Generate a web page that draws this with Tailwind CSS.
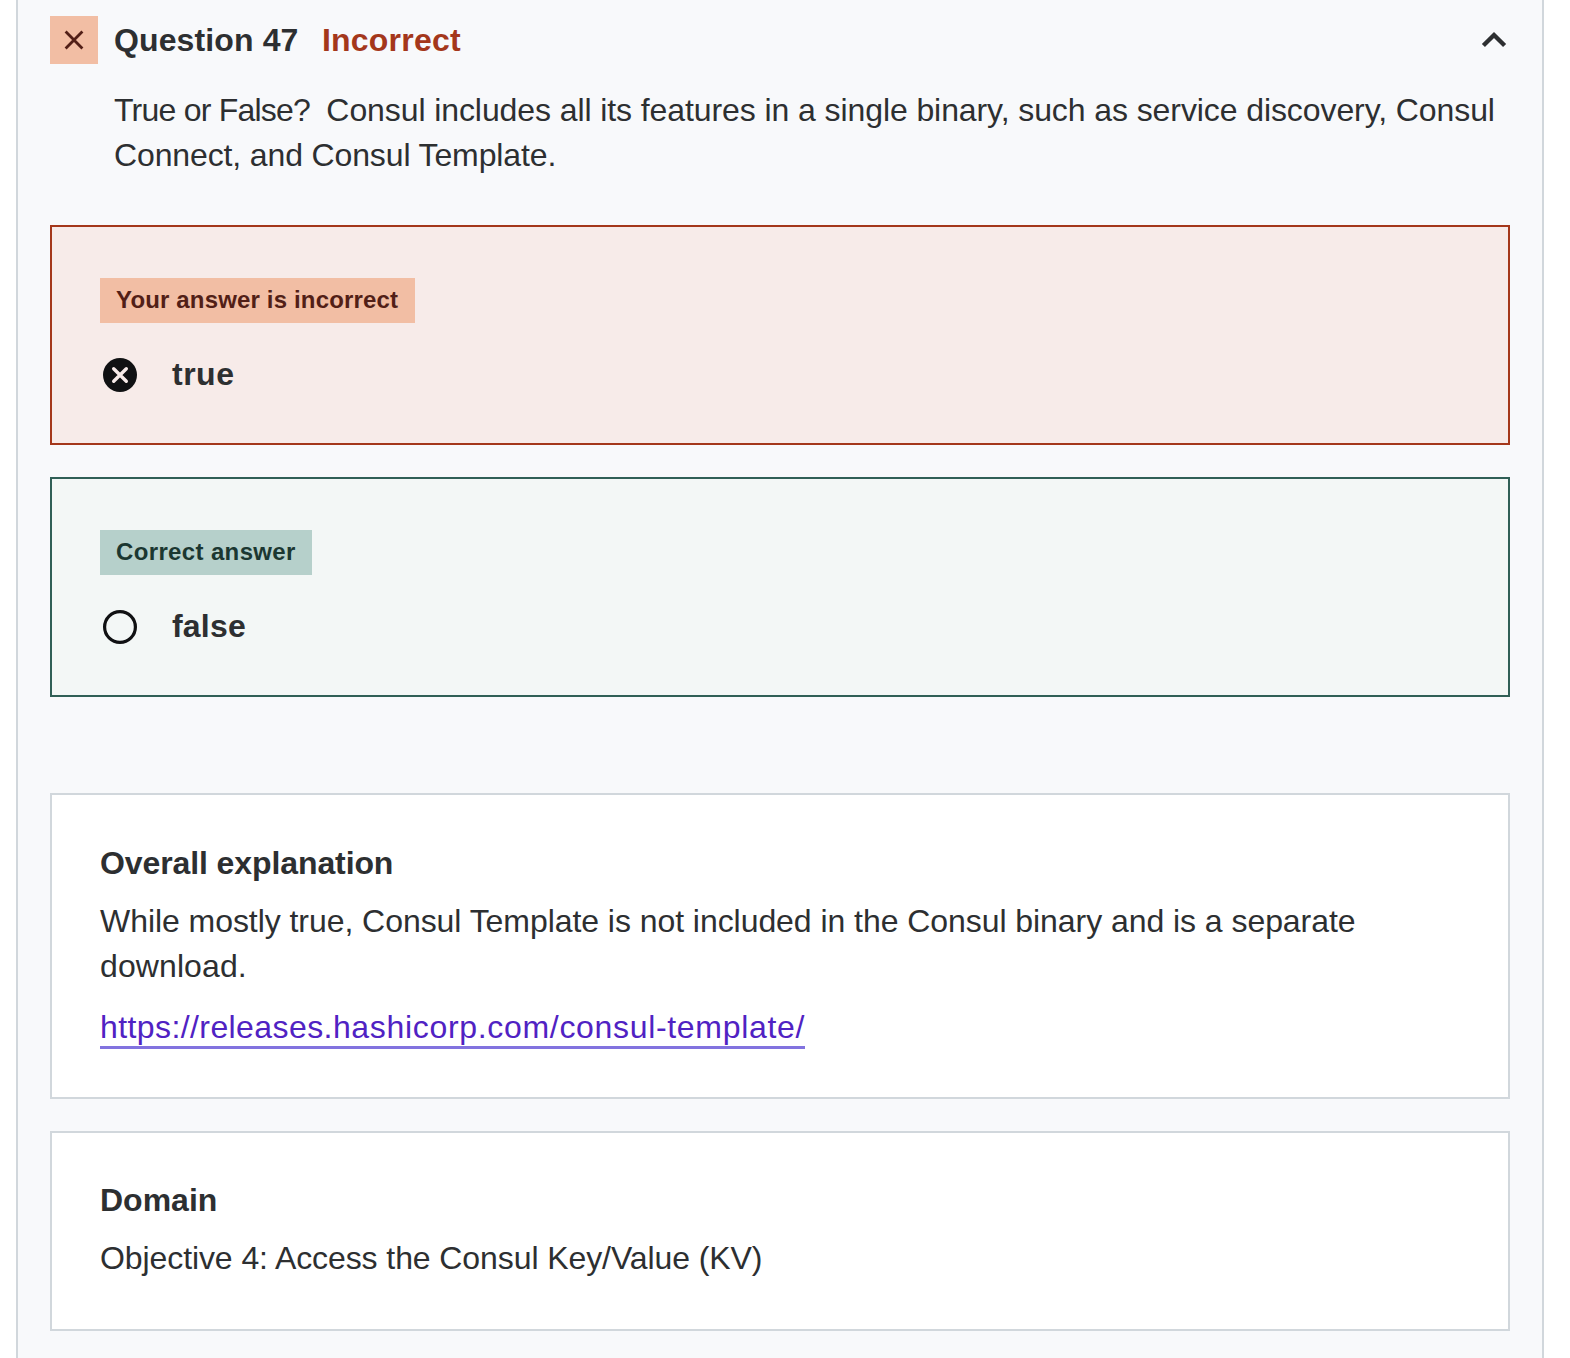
<!DOCTYPE html>
<html lang="en">
<head>
<meta charset="utf-8">
<title>Question 47</title>
<script src="https://cdn.jsdelivr.net/npm/@tailwindcss/browser@4"></script>
</head>
<body class="bg-white font-['Liberation_Sans',Arial,sans-serif] text-[32px] leading-[45px] text-[#2d2f31]">
<main class="ml-4 flex h-[1358px] w-[1528px] flex-col overflow-hidden border-x-2 border-[#d1d7dc] bg-[#f8f9fb] px-8 pt-4">
  <header class="flex h-12 items-center">
    <div class="flex size-12 items-center justify-center bg-[#f2bea4]">
      <svg class="size-12" viewBox="0 0 48 48" fill="none" stroke="#521f17" stroke-width="2.8"><path d="M15.6 15.6 32.4 32.4M32.4 15.6 15.6 32.4"/></svg>
    </div>
    <h2 class="ml-4 w-[208px] whitespace-nowrap font-bold tracking-[0.12px]">Question 47</h2>
    <span class="font-bold tracking-[0.2px] text-[#a4371b]">Incorrect</span>
    <svg class="ml-auto h-12 w-8" viewBox="0 0 32 48" fill="none" stroke="#2d2f31" stroke-width="4.4"><path d="M5.4 29.5 16 19l10.6 10.5"/></svg>
  </header>
  <div class="ml-16 mt-6 whitespace-nowrap">
    <p><span class="tracking-[-0.77px]">True or False?&nbsp; </span><span class="tracking-[-0.09px]">Consul includes all its features in a single binary, such as service discovery, Consul</span><br><span class="tracking-[-0.13px]">Connect, and Consul Template.</span></p>
  </div>
  <section class="mt-[47px] h-[220px] border-2 border-[#a4371b] bg-[#f7ebe9] px-12 pt-[51px]">
    <div class="flex h-[45px] w-[315px] items-center bg-[#f2bea4] pb-0.5 pl-4 text-2xl font-bold tracking-[0.16px] whitespace-nowrap text-[#521f17]"><span>Your answer is incorrect</span></div>
    <div class="mt-[29px] flex h-[46px] items-center">
      <svg class="size-10" viewBox="0 0 40 40" fill="none"><circle cx="20" cy="20" r="17" fill="#101113"/><path d="m13.7 13.7 12.6 12.6m0-12.6L13.7 26.3" stroke="#f7ebe9" stroke-width="3.4" stroke-linecap="round"/></svg>
      <span class="ml-8 pb-0.5 font-bold tracking-[0.5px]">true</span>
    </div>
  </section>
  <section class="mt-8 h-[220px] border-2 border-[#305f56] bg-[#f3f7f6] px-12 pt-[51px]">
    <div class="flex h-[45px] w-[212px] items-center bg-[#b6d0cb] pb-0.5 pl-4 text-2xl font-bold tracking-[0.36px] whitespace-nowrap text-[#1b3731]"><span>Correct answer</span></div>
    <div class="mt-[29px] flex h-[46px] items-center">
      <svg class="size-10" viewBox="0 0 40 40" fill="none"><circle cx="20" cy="20" r="15.4" stroke="#101113" stroke-width="3.2"/></svg>
      <span class="ml-8 pb-0.5 font-bold tracking-[0.2px]">false</span>
    </div>
  </section>
  <section class="mt-24 h-[306px] border-2 border-[#d1d7dc] bg-white px-12 pt-[46px] whitespace-nowrap">
    <h3 class="font-bold tracking-[-0.1px]">Overall explanation</h3>
    <p class="mt-[13px]"><span class="tracking-[-0.056px]">While mostly true, Consul Template is not included in the Consul binary and is a separate</span><br><span class="tracking-[0.1px]">download.</span></p>
    <a class="mt-4 flex h-[44px] w-[705px] border-b-[3px] border-[#8273df] text-[#5022c3]" href="#"><span class="tracking-[0.41px]">https://releases.</span><span class="tracking-[0.68px]">hashicorp.com/consul-template/</span></a>
  </section>
  <section class="mt-8 h-[200px] border-2 border-[#d1d7dc] bg-white px-12 pt-[45px] whitespace-nowrap">
    <h3 class="font-bold">Domain</h3>
    <p class="mt-[13px] tracking-[-0.09px]">Objective 4: Access the Consul Key/Value (KV)</p>
  </section>
</main>
</body>
</html>
